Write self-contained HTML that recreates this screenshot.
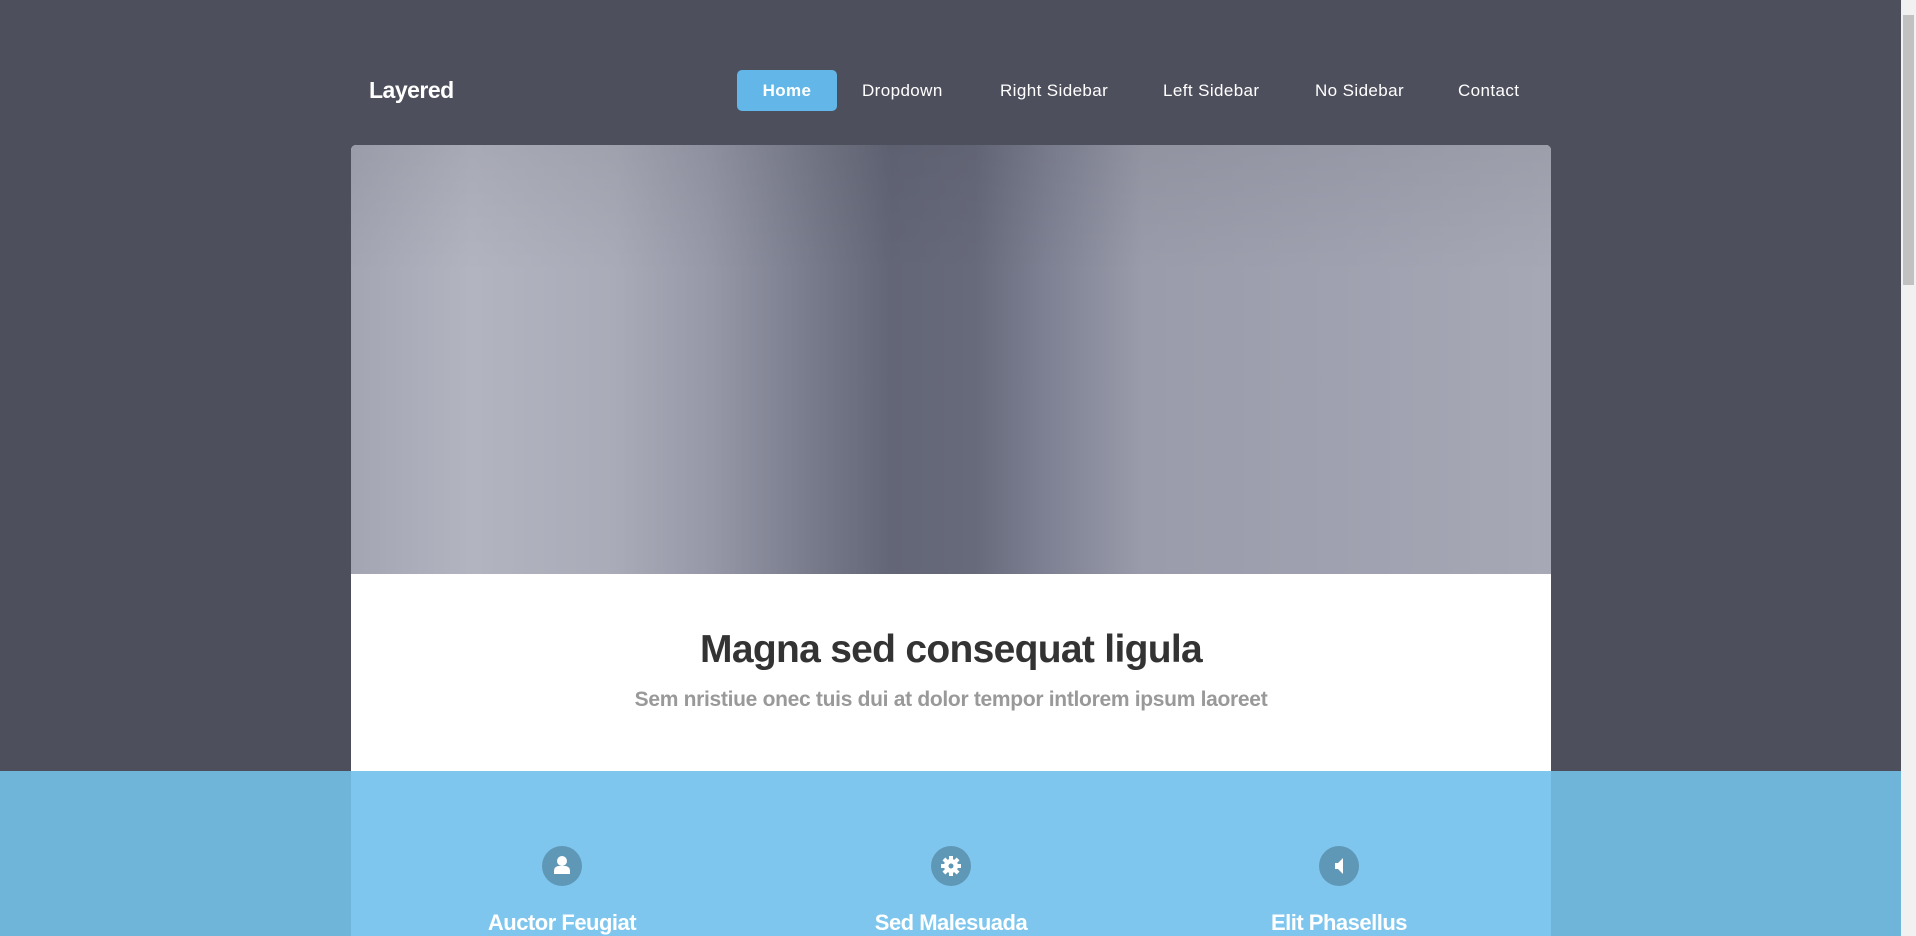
<!DOCTYPE html>
<html><head><meta charset="utf-8"><style>
*{margin:0;padding:0;box-sizing:border-box}
html,body{width:1916px;height:936px;overflow:hidden;background:#4d4f5c;font-family:"Liberation Sans",sans-serif}
.logo{position:absolute;left:369px;top:77px;color:#fff;font-weight:bold;font-size:23px;letter-spacing:-0.5px}
.nav a{position:absolute;top:70px;height:41px;line-height:41px;color:#fff;font-size:17px;text-decoration:none;letter-spacing:0.4px}
.nav a.home{left:737px;width:100px;text-align:center;background:#62b7e8;border-radius:5px;font-weight:bold}
.card{position:absolute;left:351px;top:145px;width:1200px;height:626px;background:#fff;border-radius:5px 5px 0 0;overflow:hidden}
.hero{height:429px;background:linear-gradient(90deg,#a3a5b3 0%,#b2b4c0 10%,#a9abb8 22%,#9698a8 30%,#767989 39%,#636677 45%,#676a7b 52%,#7e8193 58%,#9a9cab 66%,#a0a2b1 85%,#a6a8b5 100%)}
.hero::after{content:"";display:block;height:100%;background:linear-gradient(180deg,rgba(0,0,0,0.06),rgba(255,255,255,0) 30%,rgba(255,255,255,0))}
h1{position:absolute;left:0;width:1200px;top:483px;text-align:center;color:#333;font-size:39px;font-weight:bold;letter-spacing:-0.7px}
.sub{position:absolute;left:0;width:1200px;top:543px;text-align:center;color:#999;font-size:21px;font-weight:bold;letter-spacing:-0.3px}
.band{position:absolute;left:0;top:771px;width:1901px;height:165px;background:#6fb5da}
.inner{position:absolute;left:351px;top:0;width:1200px;height:165px;background:#7fc6ee}
.ic{position:absolute;top:75px;width:40px;height:40px;border-radius:50%;background:#5f97b6;margin-left:-20px}
.t{position:absolute;top:139px;width:300px;margin-left:-150px;text-align:center;color:#fff;font-weight:bold;font-size:22px;letter-spacing:-0.5px}
.sb{position:absolute;left:1901px;top:0;width:15px;height:936px;background:#f1f1f1}
.th{position:absolute;left:2px;top:15px;width:11px;height:270px;background:#c1c1c1}
</style></head><body>
<div class="logo">Layered</div>
<div class="nav">
<a class="home">Home</a>
<a style="left:862px">Dropdown</a>
<a style="left:1000px">Right Sidebar</a>
<a style="left:1163px">Left Sidebar</a>
<a style="left:1315px">No Sidebar</a>
<a style="left:1458px">Contact</a>
</div>
<div class="card"><div class="hero"></div>
<h1>Magna sed consequat ligula</h1>
<div class="sub">Sem nristiue onec tuis dui at dolor tempor intlorem ipsum laoreet</div>
</div>
<div class="band"><div class="inner">
<div class="ic" style="left:211px"><svg width="40" height="40" viewBox="0 0 40 40"><circle cx="20" cy="15" r="5" fill="#fff"/><path d="M12 28v-3q0-4 4-5h8q4 1 4 5v3z" fill="#fff"/></svg></div>
<div class="ic" style="left:600px"><svg width="40" height="40" viewBox="0 0 40 40"><g fill="#fff"><circle cx="20" cy="20" r="7"/><rect x="18" y="10" width="4" height="20"/><rect x="10" y="18" width="20" height="4"/><rect x="18" y="10" width="4" height="20" transform="rotate(45 20 20)"/><rect x="18" y="10" width="4" height="20" transform="rotate(-45 20 20)"/></g><circle cx="20" cy="20" r="2.5" fill="#5f97b6"/></svg></div>
<div class="ic" style="left:988px"><svg width="40" height="40" viewBox="0 0 40 40"><path d="M16 17h3l5-5v16l-5-5h-3z" fill="#fff"/></svg></div>
<div class="t" style="left:211px">Auctor Feugiat</div>
<div class="t" style="left:600px">Sed Malesuada</div>
<div class="t" style="left:988px">Elit Phasellus</div>
</div></div>
<div class="sb"><div class="th"></div></div>
</body></html>
